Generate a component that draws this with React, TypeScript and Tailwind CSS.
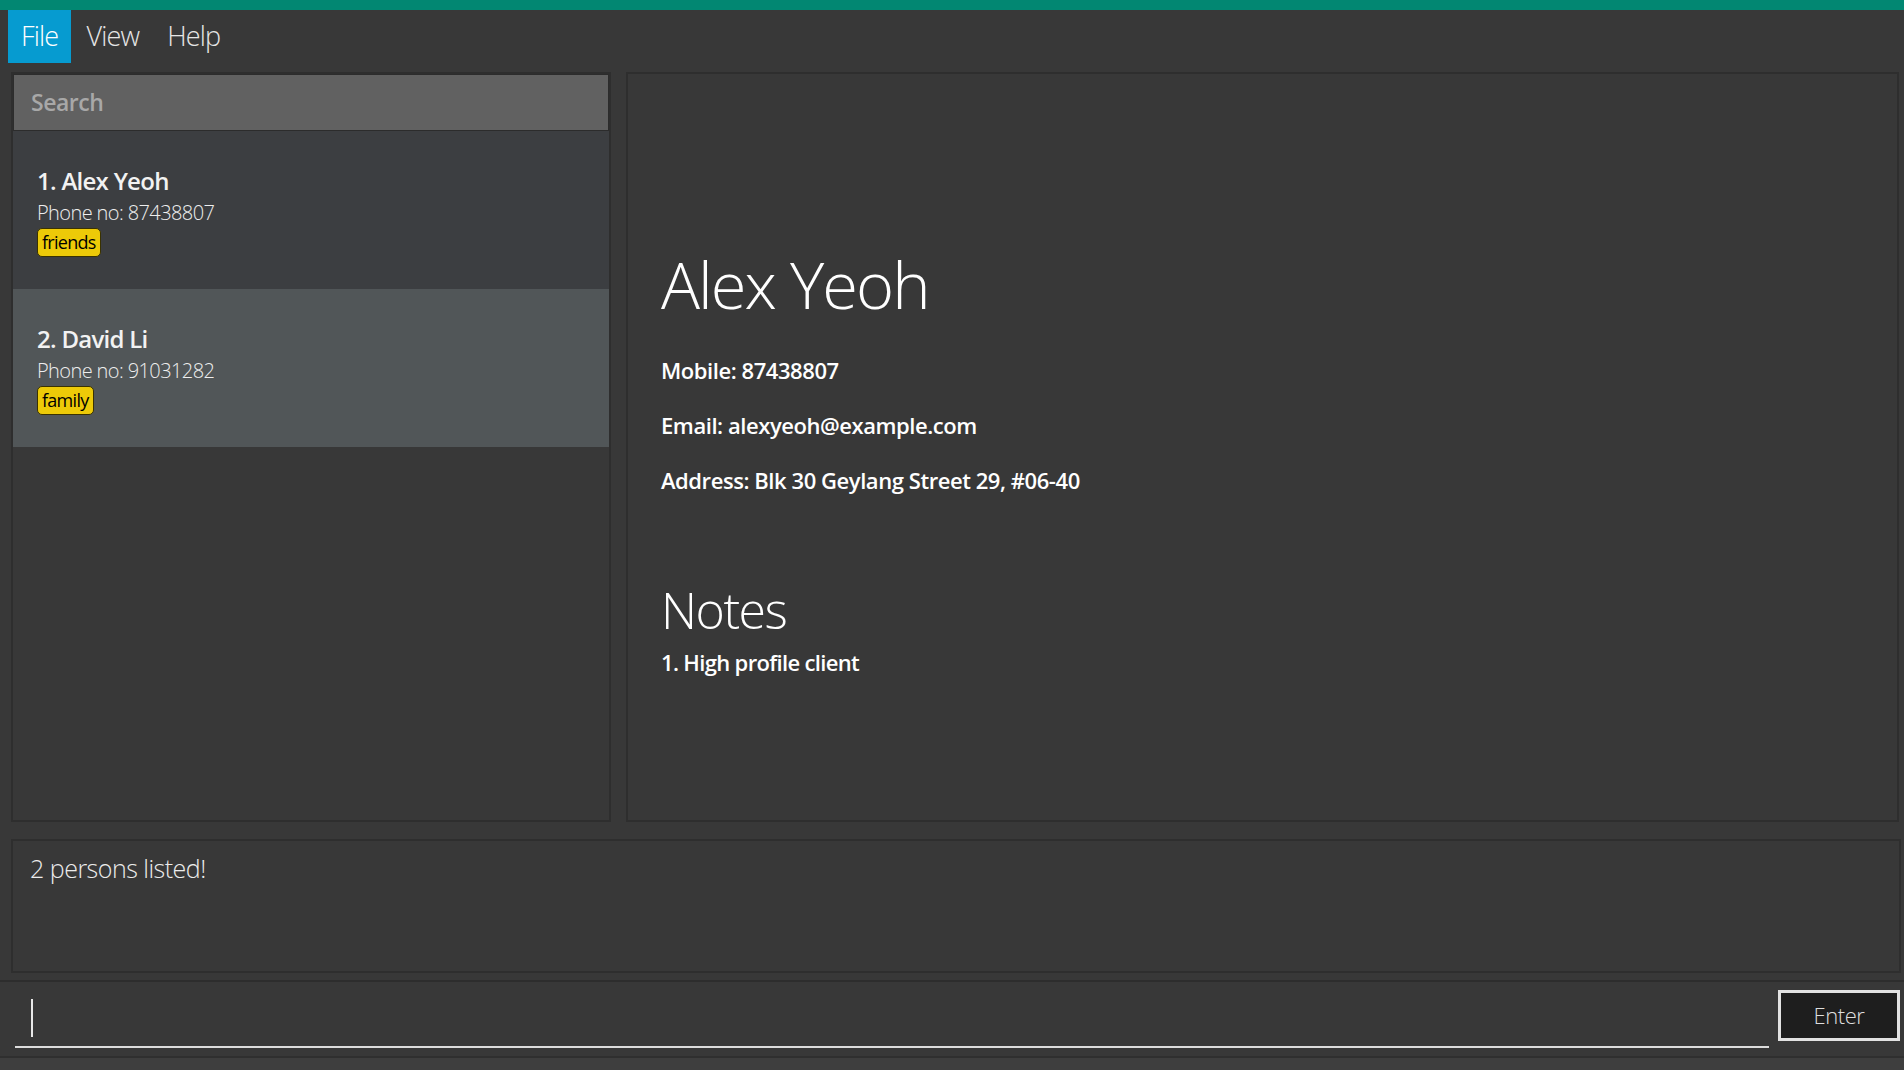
import React from "react";

const font = { fontFamily: '"Open Sans", "Noto Sans", sans-serif' };

function Tag({ label }: { label: string }) {
  return (
    <span className="inline-flex h-[29px] items-center self-start rounded-[5px] border border-[#3a3200] bg-[#edca08] px-[4px] text-[18px] leading-none tracking-[-0.04em] text-black">
      {label}
    </span>
  );
}

function Card({ idx, name, phone, tag, selected }: { idx: number; name: string; phone: string; tag: string; selected?: boolean }) {
  return (
    <div className={`flex h-[158px] flex-col justify-center pl-[24px] ${selected ? "bg-[#515658]" : "bg-[#3c3e41]"}`}>
      <div className="text-[24px] font-semibold leading-[34px] tracking-[-0.03em] text-[#f2f2f2]">
        {idx}. {name}
      </div>
      <div className="text-[20px] font-light leading-[30px] tracking-[-0.03em] text-[#eeeeee]">Phone no: {phone}</div>
      <div className="flex">
        <Tag label={tag} />
      </div>
    </div>
  );
}

export default function App() {
  return (
    <div style={font} className="flex h-[1070px] w-[1904px] flex-col overflow-hidden bg-[#383838]">
      <div className="h-[10px] bg-[#028772]" />
      <div className="flex h-[53px] items-stretch pl-[8px]">
        <div className="flex items-center bg-[#069bd0] px-[13px] text-[27px] font-light tracking-[-0.03em] text-white">File</div>
        <div className="ml-[2px] flex items-center px-[13px] text-[27px] font-light tracking-[-0.03em] text-[#e6e6e6]">View</div>
        <div className="ml-[2px] flex items-center px-[13px] text-[27px] font-light tracking-[-0.03em] text-[#e6e6e6]">Help</div>
      </div>
      <div className="mt-[9px] flex h-[750px] pl-[11px] pr-[5px]">
        <div className="flex w-[600px] flex-col border-2 border-[#2e2e2e] bg-[#383838]">
          <div className="flex h-[57px] items-center border border-[#2c2c2c] bg-[#616161] pl-[17px] text-[23px] font-semibold tracking-[-0.02em] text-[#a8a8a8]">
            Search
          </div>
          <Card idx={1} name="Alex Yeoh" phone="87438807" tag="friends" />
          <Card idx={2} name="David Li" phone="91031282" tag="family" selected />
        </div>
        <div className="ml-[15px] flex flex-1 flex-col border-2 border-[#2e2e2e] bg-[#383838] pl-[33px] pt-[170px] text-white">
          <div className="text-[65px] font-light leading-[80px] tracking-[-0.03em]">Alex Yeoh</div>
          <div className="mt-[19px] text-[22px] font-semibold leading-[55px] tracking-[-0.02em]">Mobile: 87438807</div>
          <div className="text-[22px] font-semibold leading-[55px] tracking-[-0.02em]">Email: alexyeoh@example.com</div>
          <div className="text-[22px] font-semibold leading-[55px] tracking-[-0.02em]">Address: Blk 30 Geylang Street 29, #06-40</div>
          <div className="mt-[70px] text-[50px] font-light leading-[64px] tracking-[-0.03em]">Notes</div>
          <div className="mt-[4px] text-[22px] font-semibold leading-[32px] tracking-[-0.03em]">1. High profile client</div>
        </div>
      </div>
      <div className="ml-[11px] mr-[3px] mt-[17px] h-[134px] border-2 border-[#2e2e2e] pl-[17px] pt-[10px]">
        <div className="text-[25px] font-light leading-[34px] tracking-[-0.02em] text-[#ececec]">2 persons listed!</div>
      </div>
      <div className="mt-[7px] flex h-[76px] border-t-2 border-[#2d2d2d] pl-[15px] pr-[4px]">
        <div className="relative flex flex-1 flex-col">
          <div className="ml-[16px] mt-[17px] h-[38px] w-[2px] bg-[#e8e8e8]" />
          <div className="mb-[8px] mt-auto h-[2px] bg-[#dcdcdc]" />
        </div>
        <div className="ml-[9px] mt-[8px] flex h-[51px] w-[122px] items-center justify-center border-[3px] border-[#e2e2e2] bg-[#1e1e1e] text-[22px] font-light tracking-[-0.02em] text-[#dedede]">
          Enter
        </div>
      </div>
      <div className="flex-1 border-t-2 border-[#2f2f2f] bg-[#3e3e3e]" />
    </div>
  );
}
